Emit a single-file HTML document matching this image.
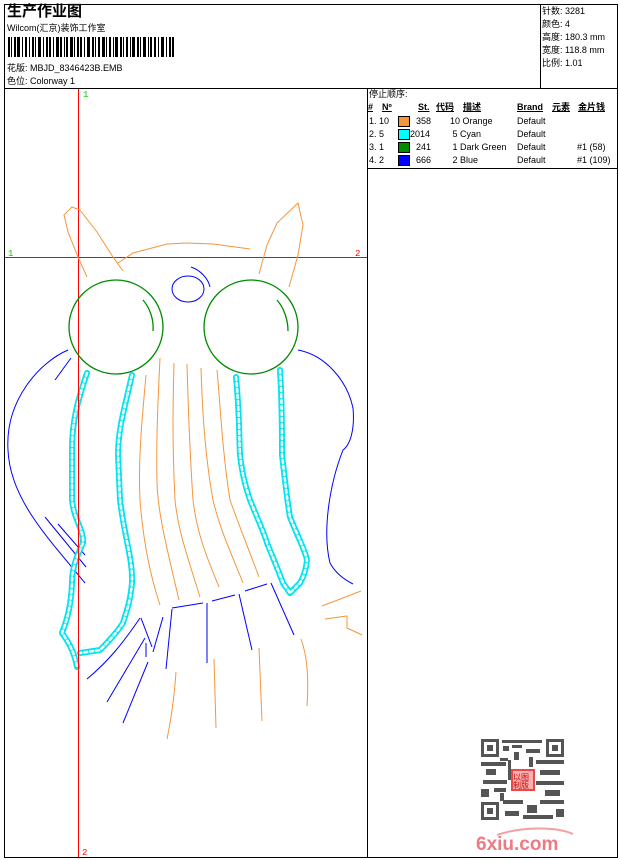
<!DOCTYPE html>
<html><head><meta charset="utf-8"><style>
*{margin:0;padding:0}
body{width:620px;height:860px;background:#fff;position:relative;overflow:hidden;font-family:"Liberation Sans","Noto Sans CJK SC",sans-serif;color:#000}
.t{position:absolute;font-size:9px;line-height:11px;white-space:nowrap}
.ln{position:absolute;background:#000}
</style></head><body>
<div class="ln" style="left:4px;top:4px;width:614px;height:1px"></div>
<div class="ln" style="left:4px;top:857px;width:614px;height:1px"></div>
<div class="ln" style="left:4px;top:4px;width:1px;height:854px"></div>
<div class="ln" style="left:617px;top:4px;width:1px;height:854px"></div>
<div class="ln" style="left:4px;top:88px;width:614px;height:1px"></div>
<div class="ln" style="left:540px;top:4px;width:1px;height:84px"></div>
<div class="ln" style="left:367px;top:88px;width:1px;height:770px"></div>
<div class="ln" style="left:367px;top:168px;width:251px;height:1px"></div>

<div class="t" style="left:7px;top:3px;font-size:15px;line-height:18px;font-weight:bold">生产作业图</div>
<div class="t" style="left:7px;top:23px">Wilcom(汇京)装饰工作室</div>
<svg style="position:absolute;left:8px;top:37px" width="166" height="20">
<g fill="#000">
<rect x="0" y="0" width="2" height="20"/><rect x="3" y="0" width="1" height="20"/><rect x="6" y="0" width="2" height="20"/><rect x="9" y="0" width="3" height="20"/><rect x="14" y="0" width="1" height="20"/><rect x="17" y="0" width="2" height="20"/><rect x="21" y="0" width="1" height="20"/><rect x="24" y="0" width="2" height="20"/><rect x="27" y="0" width="1" height="20"/><rect x="30" y="0" width="3" height="20"/><rect x="35" y="0" width="1" height="20"/><rect x="38" y="0" width="2" height="20"/><rect x="41" y="0" width="2" height="20"/><rect x="45" y="0" width="1" height="20"/><rect x="48" y="0" width="3" height="20"/><rect x="52" y="0" width="2" height="20"/><rect x="56" y="0" width="1" height="20"/><rect x="58" y="0" width="2" height="20"/><rect x="62" y="0" width="3" height="20"/><rect x="66" y="0" width="1" height="20"/><rect x="69" y="0" width="2" height="20"/><rect x="72" y="0" width="2" height="20"/><rect x="76" y="0" width="1" height="20"/><rect x="79" y="0" width="3" height="20"/><rect x="84" y="0" width="2" height="20"/><rect x="87" y="0" width="1" height="20"/><rect x="90" y="0" width="2" height="20"/><rect x="94" y="0" width="3" height="20"/><rect x="98" y="0" width="1" height="20"/><rect x="101" y="0" width="2" height="20"/><rect x="105" y="0" width="1" height="20"/><rect x="107" y="0" width="3" height="20"/><rect x="112" y="0" width="2" height="20"/><rect x="115" y="0" width="1" height="20"/><rect x="118" y="0" width="2" height="20"/><rect x="122" y="0" width="1" height="20"/><rect x="124" y="0" width="3" height="20"/><rect x="129" y="0" width="2" height="20"/><rect x="132" y="0" width="1" height="20"/><rect x="135" y="0" width="3" height="20"/><rect x="140" y="0" width="1" height="20"/><rect x="142" y="0" width="2" height="20"/><rect x="146" y="0" width="2" height="20"/><rect x="150" y="0" width="1" height="20"/><rect x="153" y="0" width="3" height="20"/><rect x="158" y="0" width="1" height="20"/><rect x="161" y="0" width="2" height="20"/><rect x="164" y="0" width="2" height="20"/>
</g></svg>
<div class="t" style="left:7px;top:63px">花版: MBJD_8346423B.EMB</div>
<div class="t" style="left:7px;top:76px">色位: Colorway 1</div>

<div class="t" style="left:542px;top:6px">针数: 3281</div>
<div class="t" style="left:542px;top:19px">颜色: 4</div>
<div class="t" style="left:542px;top:32px">高度: 180.3 mm</div>
<div class="t" style="left:542px;top:45px">宽度: 118.8 mm</div>
<div class="t" style="left:542px;top:58px">比例: 1.01</div>

<div class="t" style="left:369px;top:89px">停止顺序:</div>
<div class="t" style="left:368px;top:102px;font-weight:bold;text-decoration:underline">#</div>
<div class="t" style="left:382px;top:102px;font-weight:bold;text-decoration:underline">Nº</div>
<div class="t" style="left:418px;top:102px;font-weight:bold;text-decoration:underline">St.</div>
<div class="t" style="left:436px;top:102px;font-weight:bold;text-decoration:underline">代码</div>
<div class="t" style="left:463px;top:102px;font-weight:bold;text-decoration:underline">描述</div>
<div class="t" style="left:517px;top:102px;font-weight:bold;text-decoration:underline">Brand</div>
<div class="t" style="left:552px;top:102px;font-weight:bold;text-decoration:underline">元素</div>
<div class="t" style="left:578px;top:102px;font-weight:bold;text-decoration:underline">金片钱</div>

<div class="t" style="left:369px;top:116px">1. 10</div><div style="position:absolute;left:398px;top:116px;width:10px;height:9px;background:#f4963c;border:1px solid #000"></div><div class="t" style="left:416px;top:116px">358</div><div class="t" style="left:450px;top:116px">10 Orange</div><div class="t" style="left:517px;top:116px">Default</div>
<div class="t" style="left:369px;top:129px">2. 5</div><div style="position:absolute;left:398px;top:129px;width:10px;height:9px;background:#00ffff;border:1px solid #000"></div><div class="t" style="left:410px;top:129px">2014</div><div class="t" style="left:450px;top:129px">&nbsp;5 Cyan</div><div class="t" style="left:517px;top:129px">Default</div>
<div class="t" style="left:369px;top:142px">3. 1</div><div style="position:absolute;left:398px;top:142px;width:10px;height:9px;background:#008c00;border:1px solid #000"></div><div class="t" style="left:416px;top:142px">241</div><div class="t" style="left:450px;top:142px">&nbsp;1 Dark Green</div><div class="t" style="left:517px;top:142px">Default</div><div class="t" style="left:577px;top:142px">#1 (58)</div>
<div class="t" style="left:369px;top:155px">4. 2</div><div style="position:absolute;left:398px;top:155px;width:10px;height:9px;background:#0000ff;border:1px solid #000"></div><div class="t" style="left:416px;top:155px">666</div><div class="t" style="left:450px;top:155px">&nbsp;2 Blue</div><div class="t" style="left:517px;top:155px">Default</div><div class="t" style="left:577px;top:155px">#1 (109)</div>

<svg style="position:absolute;left:0;top:0" width="620" height="860">
<line x1="78.5" y1="89" x2="78.5" y2="857" stroke="#f00" stroke-width="1"/>
<line x1="5" y1="257.5" x2="367" y2="257.5" stroke="#f00" stroke-width="1"/>
<text x="83" y="97" font-size="9" fill="#0c0" font-family="Liberation Mono">1</text>
<text x="8" y="256" font-size="9" fill="#0c0" font-family="Liberation Mono">1</text>
<text x="355" y="256" font-size="9" fill="#f00" font-family="Liberation Mono">2</text>
<text x="82" y="855" font-size="9" fill="#f00" font-family="Liberation Mono">2</text>
<g fill="none" stroke="#f4963c" stroke-width="1">
<path d="M87,277 L78,257 L68,232 L64,215 L72,207 L80,210 L97,232 L113,257 L123,271"/>
<path d="M118,263 L133,253 L167,244 L187,243 L213,244 L250,249"/>
<path d="M259,274 L267,245 L277,223 L298,203 L303,225 L298,255 L289,287"/>
<path d="M146,375 C142,420 138,460 140,500 C143,540 150,575 160,605"/>
<path d="M160,358 C158,400 156,440 157,483 C158,510 163,533 179,600"/>
<path d="M174,363 C173,400 172,440 175,500 C178,530 187,555 200,597"/>
<path d="M187,364 C188,400 189,440 193,500 C197,535 208,560 219,587"/>
<path d="M201,368 C202,400 204,450 213,500 C220,530 232,555 243,583"/>
<path d="M217,370 C220,400 222,450 230,500 C237,520 247,545 259,577"/>
<path d="M176,672 C174,700 171,720 167,739"/>
<path d="M214,659 L216,728"/>
<path d="M259,648 L262,721"/>
<path d="M301,639 C307,655 309,677 307,706"/>
<path d="M322,606 L361,591"/>
<path d="M325,619 L347,616 L347,628 L362,635"/>
</g>
<g fill="none" stroke="#008c00" stroke-width="1.3">
<circle cx="116" cy="327" r="47"/>
<circle cx="251" cy="327" r="47"/>
<path d="M143,300 C150,308 154,320 153,331"/>
<path d="M277,300 C284,308 288,320 288,331"/>
</g>
<g fill="none" stroke="#0000ff" stroke-width="1">
<ellipse cx="188" cy="289" rx="16" ry="13"/>
<path d="M191,267 C200,270 208,278 210,287"/>
<path d="M68,350 C40,362 5,400 8,450 C10,500 50,540 85,583"/>
<path d="M71,358 L55,380"/>
<path d="M58,524 L85,555"/><path d="M45,517 L86,567"/>
<path d="M298,350 C325,355 347,380 353,408 C355,430 350,445 343,450 C330,483 322,530 330,563 C336,574 345,580 353,584"/>
<path d="M172,608 L203,603"/><path d="M212,601 L235,595"/><path d="M245,591 L267,584"/>
<path d="M172,609 L166,669"/><path d="M207,603 L207,663"/><path d="M239,594 L252,650"/><path d="M271,583 L294,635"/>
<path d="M163,617 L153,652"/><path d="M141,618 L152,647"/>
<path d="M140,618 C125,640 110,660 87,679"/><path d="M145,638 L107,702"/><path d="M148,662 L123,723"/><path d="M146,643 L146,657"/>
</g>
<g fill="none" stroke-linecap="round" stroke-linejoin="round">
<g stroke="#00e5ee" stroke-width="6">
<path d="M87,373 C78,400 72,420 72,450 L72,500 C74,520 84,530 83,543 C75,560 72,570 72,583 C71,610 65,625 62,633 C67,640 74,650 77,667"/>
<path d="M132,375 C124,410 118,430 118,455 L120,500 C125,540 133,560 132,583 C130,605 125,615 123,623 C115,635 105,645 100,650 L80,653"/>
<path d="M236,377 C240,420 239,440 240,455 C243,480 247,490 250,500 C258,520 265,535 267,543 C274,560 280,575 283,583 L290,593"/>
<path d="M280,370 C282,400 282,430 282,455 C285,480 287,500 290,517 C297,535 305,550 307,560 C306,570 303,578 300,583 L290,593"/>
</g>
<g stroke="#fff" stroke-width="2.5" stroke-dasharray="3 3">
<path d="M87,373 C78,400 72,420 72,450 L72,500 C74,520 84,530 83,543 C75,560 72,570 72,583 C71,610 65,625 62,633 C67,640 74,650 77,667"/>
<path d="M132,375 C124,410 118,430 118,455 L120,500 C125,540 133,560 132,583 C130,605 125,615 123,623 C115,635 105,645 100,650 L80,653"/>
<path d="M236,377 C240,420 239,440 240,455 C243,480 247,490 250,500 C258,520 265,535 267,543 C274,560 280,575 283,583 L290,593"/>
<path d="M280,370 C282,400 282,430 282,455 C285,480 287,500 290,517 C297,535 305,550 307,560 C306,570 303,578 300,583 L290,593"/>
</g>
</g>
<line x1="78.5" y1="360" x2="78.5" y2="680" stroke="#f00" stroke-width="1"/>
<!-- QR -->
<g fill="#555">
<rect x="481" y="739" width="18" height="18"/><rect x="484" y="742" width="12" height="12" fill="#fff"/><rect x="487" y="745" width="6" height="6"/>
<rect x="546" y="739" width="18" height="18"/><rect x="549" y="742" width="12" height="12" fill="#fff"/><rect x="552" y="745" width="6" height="6"/>
<rect x="481" y="802" width="18" height="18"/><rect x="484" y="805" width="12" height="12" fill="#fff"/><rect x="487" y="808" width="6" height="6"/>
<rect x="502" y="740" width="40" height="3"/><rect x="503" y="746" width="6" height="5"/><rect x="512" y="745" width="10" height="3"/><rect x="526" y="749" width="14" height="4"/>
<rect x="481" y="762" width="25" height="4"/><rect x="486" y="769" width="10" height="6"/><rect x="500" y="758" width="8" height="3"/><rect x="536" y="760" width="28" height="4"/>
<rect x="483" y="780" width="24" height="4"/><rect x="481" y="789" width="8" height="8"/><rect x="494" y="788" width="12" height="4"/><rect x="540" y="770" width="20" height="5"/>
<rect x="536" y="781" width="28" height="4"/><rect x="545" y="790" width="15" height="6"/><rect x="503" y="800" width="20" height="4"/><rect x="527" y="805" width="10" height="8"/>
<rect x="540" y="800" width="24" height="4"/><rect x="505" y="811" width="14" height="5"/><rect x="523" y="815" width="30" height="4"/><rect x="556" y="809" width="8" height="8"/>
<rect x="508" y="760" width="3" height="20" /><rect x="514" y="752" width="5" height="8"/><rect x="529" y="757" width="4" height="10"/><rect x="500" y="793" width="4" height="8"/>
</g>
<rect x="511" y="769" width="24" height="22" fill="#e84a4a"/>
<rect x="513" y="771" width="20" height="18" fill="#f9b0b0"/>
<text x="513" y="780" font-size="8" fill="#c00" font-family="Noto Sans CJK SC">以图</text>
<text x="513" y="788" font-size="8" fill="#c00" font-family="Noto Sans CJK SC">制版</text>
<path d="M497,835 C520,827 555,826 573,834" stroke="#f2a0a4" stroke-width="2" fill="none"/>
<text x="476" y="850" font-size="19" font-weight="bold" fill="#ee7a82" font-family="Liberation Sans">6xiu.com</text>
</svg>
</body></html>
